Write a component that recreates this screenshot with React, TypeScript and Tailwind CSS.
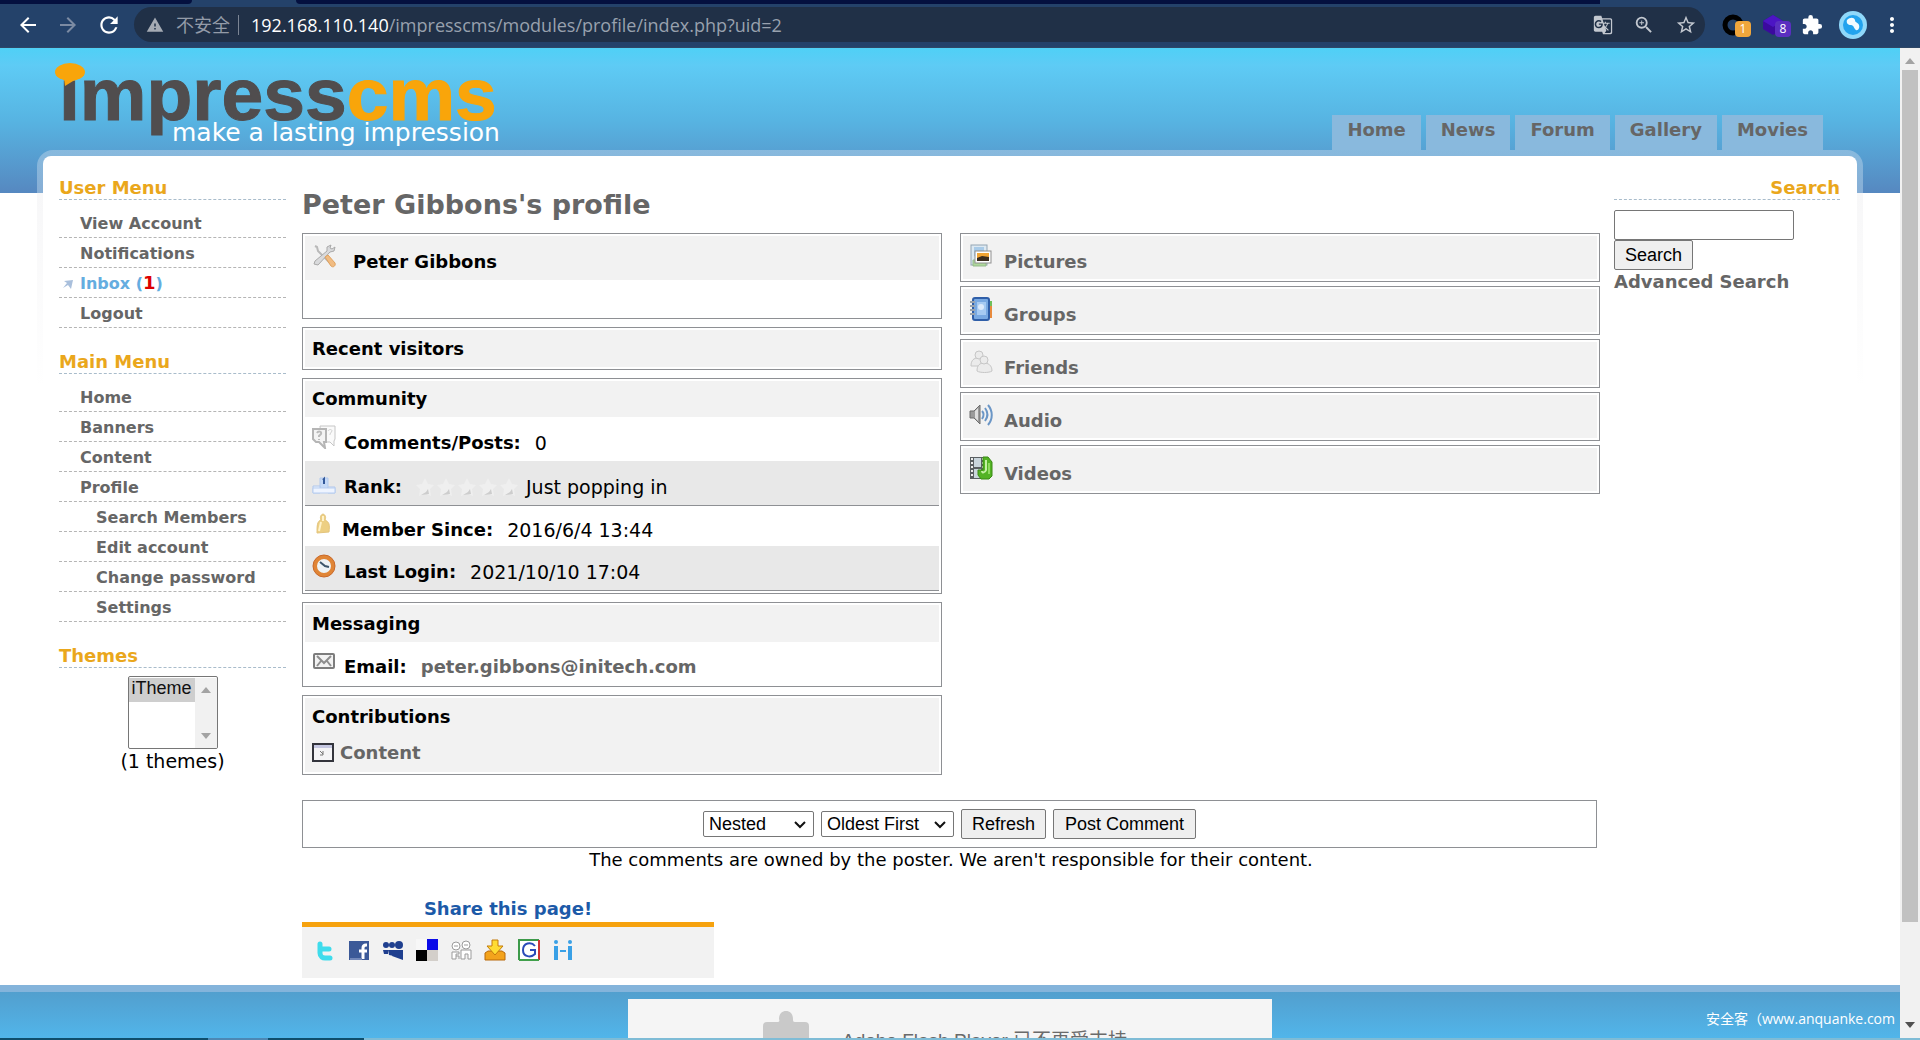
import type { ReactNode } from "react";
import {
  MdArrowBack,
  MdArrowForward,
  MdExtension,
  MdGTranslate,
  MdMoreVert,
  MdRefresh,
  MdStarBorder,
  MdWarning,
  MdZoomIn,
} from "react-icons/md";

function BrowserBar() {
  return (
    <header className="shrink-0 bg-[#24426a] font-['Open_Sans','Noto_Sans_CJK_SC',sans-serif]">
      <div className="flex h-1">
        <div className="w-48 rounded-br bg-[#04103f]" />
        <div className="w-26" />
        <div className="flex-1 rounded-bl bg-[#04103f]" />
        <div className="w-80" />
      </div>
      <div className="flex h-11 items-center border-b border-[#2f4766] pb-0.5 pl-4">
        <button aria-label="Back" className="text-white">
          <MdArrowBack size={24} />
        </button>
        <button aria-label="Forward" className="ml-4 text-[#7c8ba3]">
          <MdArrowForward size={24} />
        </button>
        <button aria-label="Reload" className="ml-4 text-white">
          <MdRefresh size={26} />
        </button>
        <div className="ml-3 flex h-[35px] min-w-0 flex-1 items-center rounded-full bg-[#203047] pr-2 pl-3 text-lg">
          <MdWarning size={18} className="shrink-0 text-[#a5abb4]" />
          <span className="ml-3 shrink-0 text-[#939ba8]">不安全</span>
          <span className="mx-2 h-5 w-px shrink-0 bg-[#7b8594]" />
          <input
            aria-label="Address"
            className="sr-only"
            defaultValue="192.168.110.140/impresscms/modules/profile/index.php?uid=2"
          />
          <span className="ml-1 flex-1 truncate text-[#98a1ae]">
            <span className="text-white">192.168.110.140</span>
            /impresscms/modules/profile/index.php?uid=2
          </span>
          <div className="flex items-center gap-5 text-[#c3c8d0]">
            <button aria-label="Translate">
              <MdGTranslate size={20} />
            </button>
            <button aria-label="Zoom">
              <MdZoomIn size={22} />
            </button>
            <button aria-label="Bookmark">
              <MdStarBorder size={22} />
            </button>
          </div>
        </div>
        <div className="flex items-center gap-4 pr-4 pl-4">
          <button aria-label="Extension, 1 item" className="relative">
            <svg width="24" height="24" viewBox="0 0 24 24">
              <circle cx="12" cy="12" r="8" fill="none" stroke="#000" strokeWidth="5" />
            </svg>
            <span className="absolute top-2 left-3.5 h-4 w-4 rounded-sm bg-[#f0a63c] text-center text-xs leading-4 text-white">
              1
            </span>
          </button>
          <button aria-label="Extension, 8 items" className="relative">
            <svg width="24" height="24" viewBox="0 0 24 24">
              <path d="M12 2l10 6v8l-10 6-10-6V8z" fill="#3b0a9e" />
              <path d="M12 2l10 6-10 6L2 8z" fill="#4c15c4" />
            </svg>
            <span className="absolute top-2 left-3.5 h-4 w-4 rounded-sm bg-[#5a2fc0] text-center text-xs leading-4 text-white">
              8
            </span>
          </button>
          <button aria-label="Extensions" className="text-white">
            <MdExtension size={22} />
          </button>
          <button aria-label="Profile">
            <svg width="28" height="28" viewBox="0 0 28 28">
              <circle cx="14" cy="14" r="14" fill="#8fd8fa" />
              <circle cx="14" cy="14" r="10" fill="#22a3ee" />
              <path d="M8 9c3-3 7-3 8 0 0 3 3 2 4 5s-1 6-3 5-2-5-5-5-5-2-4-5z" fill="#f2fbff" />
            </svg>
          </button>
          <button aria-label="Menu" className="-ml-[3px] text-white">
            <MdMoreVert size={24} />
          </button>
        </div>
      </div>
    </header>
  );
}

function Logo() {
  return (
    <svg width="460" height="90" viewBox="0 0 460 90" role="img" aria-label="impresscms make a lasting impression">
      <text
        x="4"
        y="60"
        fontSize="75"
        fontWeight="bold"
        fontFamily="'Liberation Sans',sans-serif"
        fill="#504d4e"
        stroke="#504d4e"
        strokeWidth="1"
      >
        ımpress
        <tspan fill="#f9a50a" stroke="#f9a50a">
          cms
        </tspan>
      </text>
      <ellipse cx="15" cy="12" rx="15" ry="9" fill="#f9a50a" />
      <path d="M9 18h14l-13 8z" fill="#f9a50a" />
      <text x="117" y="81" fontSize="25" fontFamily="'DejaVu Sans',sans-serif" fill="#fff">
        make a lasting impression
      </text>
    </svg>
  );
}

const tabs = ["Home", "News", "Forum", "Gallery", "Movies"];

function SiteHeader() {
  return (
    <div className="flex h-[102px] items-end justify-between pr-[77px] pl-[55px]">
      <a href="#home">
        <Logo />
      </a>
      <nav className="flex gap-[5px]">
        {tabs.map((t) => (
          <a
            key={t}
            href={`#${t}`}
            className="h-[35px] bg-[#89b9dd] px-[15px] pt-[3px] text-lg leading-6 font-bold text-[#666]"
          >
            {t}
          </a>
        ))}
      </nav>
    </div>
  );
}

function SideHeading({ children, right }: { children: ReactNode; right?: boolean }) {
  return (
    <h2
      className={`border-b border-dashed border-[#a9bccb] pt-0.5 text-lg leading-[22px] font-bold text-[#eaa71c] ${
        right ? "text-right" : ""
      }`}
    >
      {children}
    </h2>
  );
}

type Item = { label: string; sub?: boolean; unread?: number };

const userMenu: Item[] = [
  { label: "View Account" },
  { label: "Notifications" },
  { label: "Inbox", unread: 1 },
  { label: "Logout" },
];
const mainMenu: Item[] = [
  { label: "Home" },
  { label: "Banners" },
  { label: "Content" },
  { label: "Profile" },
  { label: "Search Members", sub: true },
  { label: "Edit account", sub: true },
  { label: "Change password", sub: true },
  { label: "Settings", sub: true },
];

function Menu({ title, items }: { title: string; items: Item[] }) {
  return (
    <section>
      <SideHeading>{title}</SideHeading>
      <ul className="mt-2">
        {items.map((it) => (
          <li
            key={it.label}
            className={`flex h-[30px] items-center border-b border-dashed border-[#b5b5b5] pt-0.5 text-base font-bold text-[#666] ${
              it.sub ? "pl-[37px]" : it.unread ? "pl-[3px]" : "pl-[21px]"
            }`}
          >
            {it.unread ? (
              <>
                <svg width="12" height="12" viewBox="0 0 12 12" className="mr-[6px]">
                  <path d="M2 3l9-1-2 9-3-4-5 3 4-5z" fill="#a9bfdc" />
                </svg>
                <a href="#inbox" className="text-[#64ade0]">
                  {it.label} (<span className="text-lg leading-6 text-[#dd0000]">{it.unread}</span>)
                </a>
              </>
            ) : (
              <a href={`#${it.label}`}>{it.label}</a>
            )}
          </li>
        ))}
      </ul>
    </section>
  );
}

function Themes() {
  return (
    <section>
      <SideHeading>Themes</SideHeading>
      <div className="mt-2 flex flex-col items-center">
        <div className="flex h-[73px] w-[90px] overflow-hidden rounded-xs border border-[#767676] bg-white pt-px">
          <select
            size={3}
            aria-label="Theme"
            defaultValue="iTheme"
            className="min-w-0 flex-1 appearance-none overflow-hidden font-['Liberation_Sans',sans-serif] text-lg leading-6"
          >
            <option value="iTheme" className="h-6 bg-[#cecece] px-[3px] py-0">
              iTheme
            </option>
          </select>
          <div className="flex w-[22px] flex-col items-center justify-between bg-[#f1f1f1] py-[9px]">
            <svg width="10" height="6" viewBox="0 0 10 6">
              <path d="M0 6l5-6 5 6z" fill="#a3a3a3" />
            </svg>
            <svg width="10" height="6" viewBox="0 0 10 6">
              <path d="M0 0l5 6 5-6z" fill="#a3a3a3" />
            </svg>
          </div>
        </div>
        <p className="text-[19px] leading-6">(1 themes)</p>
      </div>
    </section>
  );
}

function Icon({ children, w = 24, h = 24 }: { children: ReactNode; w?: number; h?: number }) {
  return (
    <svg width={w} height={h} viewBox={`0 0 ${w} ${h}`} className="shrink-0" aria-hidden="true">
      {children}
    </svg>
  );
}

function ToolsIcon() {
  return (
    <Icon>
      <path d="M3 2l2 1 1 4 13 13" fill="none" stroke="#b9b9b9" strokeWidth="2" />
      <path d="M2 20l4 1 12-13 4-1 1-4-3 2-2-1 1-3-4 2v4L3 17z" fill="#d9dadc" stroke="#a9a9a9" />
      <path d="M13 13l3-2 7 8c1 3-2 5-4 3z" fill="#f1bc82" stroke="#e0a25f" />
    </Icon>
  );
}

function CommentsIcon() {
  return (
    <Icon>
      <path d="M8 1h15v13l-1 2v5l-4-4H9z" fill="#fafafa" stroke="#c6c6c6" />
      <path d="M1 4h13v13h-2l1 6-6-6H4l-3-3z" fill="#f4f4f4" stroke="#b5b5b5" strokeWidth="2" />
      <path d="M5 8c1-2 5-2 4 1l-2 2v1m0 2v1" fill="none" stroke="#bbb" strokeWidth="2" />
      <path d="M16 6c1-2 4-2 4 0l-2 3v1" fill="none" stroke="#d2d2d2" />
    </Icon>
  );
}

function RankIcon() {
  return (
    <Icon h={26}>
      <g transform="translate(0 8)">
        <path d="M8 2h8v14H8z" fill="#c6daf7" stroke="#b3caee" />
        <path d="M1 10h7v7H1zM16 11h7v6h-7z" fill="#e7f0fd" stroke="#b0c7ec" />
        <path d="M1 12h22v5H1z" fill="#eef4ff" stroke="#b7cdf0" />
        <path d="M11 4l1-1v5" fill="none" stroke="#33589a" strokeWidth="2" />
      </g>
    </Icon>
  );
}

function MemberIcon() {
  return (
    <Icon w={22} h={22}>
      <path d="M11 1c3 1 3 4 2 6 4 2 5 4 4 12l-12 1c0-7 0-12 4-13-1-2-1-5 2-6z" fill="#edcf83" stroke="#e3c47c" />
      <path d="M9 9l-2 9M11 3v5" stroke="#fff3cb" strokeWidth="2" />
    </Icon>
  );
}

function ClockIcon() {
  return (
    <Icon>
      <circle cx="12" cy="12" r="9" fill="#eef3f5" stroke="#e08536" strokeWidth="4" />
      <circle cx="12" cy="12" r="11" fill="none" stroke="#c9692a" />
      <path d="M8 8l5 4 4 1" fill="none" stroke="#3d566b" strokeWidth="2" />
    </Icon>
  );
}

function MailIcon() {
  return (
    <Icon h={18}>
      <rect x="2" y="2" width="20" height="14" rx="1" fill="#f3f3f3" stroke="#7d7d7d" strokeWidth="2" />
      <path d="M5 4l7 7 7-7M5 14l4-5M19 14l-4-5" fill="none" stroke="#8e8e8e" strokeWidth="2" />
    </Icon>
  );
}

function WindowIcon() {
  return (
    <Icon w={22} h={19}>
      <rect x="1" y="1" width="20" height="17" fill="#f4f4f6" stroke="#33343c" strokeWidth="2" />
      <path d="M2 2h18v3H2z" fill="#c6c8e2" />
      <path d="M8 8l3 3M11 8v4H8" fill="none" stroke="#777" />
    </Icon>
  );
}

function PicturesIcon() {
  return (
    <Icon>
      <rect x="2" y="1" width="16" height="20" fill="#dde9f2" stroke="#94a5b3" />
      <rect x="5" y="3" width="10" height="9" fill="#a9cbe8" />
      <path d="M4 16h13v6H4z" fill="#aed89b" stroke="#95b98a" />
      <rect x="6" y="7" width="16" height="12" fill="#fff" stroke="#8f8f8f" />
      <rect x="8" y="9" width="12" height="8" fill="#f0a434" />
      <path d="M8 14l5-2 7 1v4H8z" fill="#3a2c1e" />
    </Icon>
  );
}

function GroupsIcon() {
  return (
    <Icon>
      <path d="M19 4h4v17h-4z" fill="#e88a3c" />
      <path d="M20 4h3v5h-3z" fill="#6fbf5a" />
      <rect x="4" y="1" width="16" height="22" rx="2" fill="#79a9e2" stroke="#2f5ea8" strokeWidth="2" />
      <rect x="8" y="5" width="9" height="13" fill="#a6caf2" />
      <circle cx="12" cy="10" r="3" fill="#dceafb" />
      <path d="M1 5h5M1 9h5M1 13h5M1 17h5" stroke="#9aa3ad" strokeWidth="2" />
    </Icon>
  );
}

function FriendsIcon() {
  return (
    <Icon>
      <g fill="#ebebeb" stroke="#c6c6c6">
        <path d="M2 16c0-6 3-8 7-8s7 2 7 8z" />
        <circle cx="10" cy="5" r="4" />
        <path d="M8 21c0-6 3-8 7-8s8 2 8 8c-3 2-12 2-15 0z" />
        <circle cx="15" cy="10" r="4" />
      </g>
    </Icon>
  );
}

function AudioIcon() {
  return (
    <Icon>
      <path d="M1 8h4l6-6v19l-6-6H1z" fill="#9b9b9b" stroke="#6d6d6d" />
      <path d="M6 8l3-3v13l-3-3z" fill="#dedede" />
      <path d="M13 8c2 2 2 5 0 8M16 5c3 4 3 9 0 13M19 2c5 6 5 14 0 20" fill="none" stroke="#6b96c6" strokeWidth="2" />
    </Icon>
  );
}

function VideosIcon() {
  return (
    <Icon>
      <rect x="1" y="1" width="15" height="22" fill="#5a5f62" />
      <path d="M5 2h7v9H5zM5 13h7v9H5z" fill="#c9d5dc" />
      <path d="M3 2v20M14 2v20" stroke="#eee" strokeWidth="2" strokeDasharray="2 2" />
      <path d="M14 1h5l4 5v14l-3 3h-8l-3-4v-5h5z" fill="#53b324" stroke="#3a8a14" />
      <path d="M17 4v10c-1 3-4 3-4 1" fill="none" stroke="#c4f0a4" strokeWidth="2" />
      <path d="M20 7v11" stroke="#8fdb5f" strokeWidth="2" />
    </Icon>
  );
}

function StarRow() {
  return (
    <svg width="102" height="20" viewBox="0 0 102 20" role="img" aria-label="0 of 5 stars">
      {[0, 21, 42, 63, 84].map((x) => (
        <g key={x} transform={`translate(${x} 0)`}>
          <path d="M9 1l3 6 6 1-4 4 1 7-6-3-6 3 1-7-4-4 6-1z" fill="#efefef" />
          <path d="M5 18l5-3 2-3 1 5z" fill="#cdcdcd" />
        </g>
      ))}
    </svg>
  );
}

function Box({ children }: { children: ReactNode }) {
  return <section className="border border-[#8e9094] bg-white p-[2px]">{children}</section>;
}

function BoxTitle({ children, className = "h-9" }: { children: ReactNode; className?: string }) {
  return (
    <h2 className={`flex items-center bg-[#f2f2f2] px-[7px] text-lg font-bold text-black ${className}`}>{children}</h2>
  );
}

function Row({
  icon,
  label,
  children,
  shaded,
  className = "h-11",
}: {
  icon: ReactNode;
  label: string;
  children: ReactNode;
  shaded?: boolean;
  className?: string;
}) {
  return (
    <div
      className={`flex items-center px-[7px] text-lg ${className} ${
        shaded ? "border-b border-[#8e9094] bg-[#e8e8e8]" : ""
      }`}
    >
      <span className="mb-1">{icon}</span>
      <span className="mt-2 ml-2 font-bold">{label}</span>
      <span className="mt-2 ml-[14px] flex items-center gap-2 text-[19px] leading-6">{children}</span>
    </div>
  );
}

const albums = [
  { label: "Pictures", icon: <PicturesIcon /> },
  { label: "Groups", icon: <GroupsIcon /> },
  { label: "Friends", icon: <FriendsIcon /> },
  { label: "Audio", icon: <AudioIcon /> },
  { label: "Videos", icon: <VideosIcon /> },
];

const control = "rounded-xs border border-[#767676] font-['Liberation_Sans',sans-serif] text-lg text-black";

function Dropdown({ label, value, className }: { label: string; value: string; className: string }) {
  return (
    <span className="relative flex">
      <select
        aria-label={label}
        defaultValue={value}
        className={`h-[26px] appearance-none bg-white pl-[5px] leading-6 ${control} ${className}`}
      >
        <option>{value}</option>
      </select>
      <svg width="12" height="8" viewBox="0 0 12 8" className="pointer-events-none absolute top-[10px] right-2">
        <path d="M1 1l5 5 5-5" fill="none" stroke="#111" strokeWidth="2" />
      </svg>
    </span>
  );
}

const shares: { label: string; icon: ReactNode }[] = [
  {
    label: "Twitter",
    icon: (
      <path
        d="M6 5v9c0 4 3 5 5 5h5M6 10h9"
        fill="none"
        stroke="#3fdcec"
        strokeWidth="5"
        strokeLinecap="round"
        strokeLinejoin="round"
      />
    ),
  },
  {
    label: "Facebook",
    icon: (
      <>
        <rect x="1" y="2" width="20" height="19" fill="#3b5998" />
        <path d="M19 6h-1c-2 0-3 1-3 3v11M11 12h8" fill="none" stroke="#fff" strokeWidth="3" />
        <path d="M2 20h12" stroke="#7288ba" strokeWidth="2" />
      </>
    ),
  },
  {
    label: "MySpace",
    icon: (
      <g fill="#1f3f8f">
        <circle cx="4" cy="6" r="3" />
        <circle cx="10" cy="6" r="3" />
        <circle cx="17" cy="6" r="4" />
        <path d="M1 11h5v4H2zM6 11h6v6l-5-1zM11 11h10v10l-11-4z" />
      </g>
    ),
  },
  {
    label: "Delicious",
    icon: (
      <>
        <rect x="0" y="0" width="22" height="22" fill="#f7f7f7" />
        <rect x="11" y="0" width="11" height="11" fill="#0b0be8" />
        <rect x="0" y="11" width="11" height="11" fill="#000" />
        <rect x="11" y="11" width="11" height="11" fill="#d3cfca" />
      </>
    ),
  },
  {
    label: "Digg",
    icon: (
      <g fill="#fff" stroke="#9b9b9b">
        <circle cx="6" cy="7" r="4" />
        <circle cx="16" cy="6" r="4" />
        <path d="M2 13h7v2H6v5H2zM11 11h10v9h-3v-5h-3v5h-4z" />
        <path d="M4 7h4M14 6h4M6 17h3v3" fill="none" />
      </g>
    ),
  },
  {
    label: "Save",
    icon: (
      <>
        <path d="M1 14l3-2h14l3 2v7H1z" fill="#f3a31c" stroke="#b8690a" />
        <path d="M8 1h6v6h5l-8 9-8-9h5z" fill="#ffdc32" stroke="#c47a0b" />
      </>
    ),
  },
  {
    label: "Google",
    icon: (
      <>
        <path d="M1 21V1h20" fill="none" stroke="#3d9a4a" strokeWidth="2" />
        <path d="M21 1v20" stroke="#cc3434" strokeWidth="2" />
        <path d="M1 21h20" stroke="#41a04c" strokeWidth="2" />
        <rect x="2" y="2" width="18" height="18" fill="#fff" />
        <path d="M17 7c-4-5-12-3-12 4s8 8 12 4v-4h-5" fill="none" stroke="#2b4bb8" strokeWidth="2" />
      </>
    ),
  },
  {
    label: "Hi5",
    icon: (
      <g fill="#39a0e6">
        <circle cx="4" cy="3" r="2" />
        <circle cx="18" cy="3" r="2" />
        <path d="M2 7h4v14H2zM16 7h4v14h-4zM8 11h6v2H8z" />
      </g>
    ),
  },
];

function Share() {
  return (
    <section className="mt-[23px] w-[412px]">
      <h2 className="border-b-5 border-[#f6a20e] pt-0.5 pb-px text-center text-lg leading-6 font-bold text-[#1c5aa8]">
        Share this page!
      </h2>
      <div className="flex h-[51px] items-start gap-3 bg-[#f2f2f2] px-3 pt-3">
        {shares.map((s) => (
          <a key={s.label} href={`#${s.label}`} aria-label={s.label}>
            <Icon w={22} h={22}>
              {s.icon}
            </Icon>
          </a>
        ))}
      </div>
    </section>
  );
}

function Profile() {
  return (
    <main className="min-w-0 flex-1 pt-3">
      <h1 className="text-[27px] leading-9 font-bold text-[#666]">Peter Gibbons's profile</h1>
      <div className="mt-[10px] grid grid-cols-2 items-start gap-[18px]">
        <div className="flex flex-col gap-2">
          <Box>
            <BoxTitle className="h-11">
              <span className="mb-1">
                <ToolsIcon />
              </span>
              <span className="mt-2 ml-[17px]">Peter Gibbons</span>
            </BoxTitle>
            <div className="h-9" />
          </Box>
          <Box>
            <BoxTitle className="h-[37px]">Recent visitors</BoxTitle>
          </Box>
          <Box>
            <BoxTitle>Community</BoxTitle>
            <Row icon={<CommentsIcon />} label="Comments/Posts:">
              0
            </Row>
            <Row icon={<RankIcon />} label="Rank:" shaded className="h-[45px]">
              <StarRow />
              Just popping in
            </Row>
            <Row icon={<MemberIcon />} label="Member Since:" className="h-10">
              2016/6/4 13:44
            </Row>
            <Row icon={<ClockIcon />} label="Last Login:" shaded className="h-[45px]">
              2021/10/10 17:04
            </Row>
          </Box>
          <Box>
            <BoxTitle className="h-[37px]">Messaging</BoxTitle>
            <Row icon={<MailIcon />} label="Email:" className="h-[42px]">
              <a href="#mail" className="text-lg leading-6 font-bold text-[#666]">
                peter.gibbons@initech.com
              </a>
            </Row>
          </Box>
          <Box>
            <BoxTitle className="h-[37px]">Contributions</BoxTitle>
            <div className="flex h-[37px] items-center gap-[6px] bg-[#f2f2f2] px-[7px] pb-0.5 text-lg font-bold text-[#666]">
              <WindowIcon />
              <a href="#content">Content</a>
            </div>
          </Box>
        </div>
        <div className="flex flex-col gap-1">
          {albums.map((a) => (
            <Box key={a.label}>
              <a
                href={`#${a.label}`}
                className="flex h-[43px] items-center gap-[11px] bg-[#f2f2f2] px-[6px] text-lg font-bold text-[#666]"
              >
                <span className="mb-1">{a.icon}</span>
                <span className="mt-2">{a.label}</span>
              </a>
            </Box>
          ))}
        </div>
      </div>
      <form className="mt-[25px] mr-[3px] flex h-12 items-center justify-center gap-[7px] border border-[#8e9094]">
        <Dropdown label="View mode" value="Nested" className="w-[111px]" />
        <Dropdown label="Sort order" value="Oldest First" className="w-[133px]" />
        <button type="button" className={`h-[30px] bg-[#efefef] px-[10px] ${control}`}>
          Refresh
        </button>
        <button type="button" className={`h-[30px] bg-[#efefef] px-[11px] ${control}`}>
          Post Comment
        </button>
      </form>
      <p className="text-center text-lg leading-6">
        The comments are owned by the poster. We aren't responsible for their content.
      </p>
      <Share />
    </main>
  );
}

function SearchPanel() {
  return (
    <aside className="w-[226px] shrink-0">
      <SideHeading right>Search</SideHeading>
      <form className="mt-[10px] flex flex-col items-start">
        <input type="text" aria-label="Search terms" className={`h-[30px] w-[180px] bg-white px-1 ${control}`} />
        <button type="button" className={`h-[30px] bg-[#efefef] px-[10px] ${control}`}>
          Search
        </button>
      </form>
      <a href="#advanced" className="text-lg leading-6 font-bold text-[#666]">
        Advanced Search
      </a>
    </aside>
  );
}

function Footer() {
  return (
    <footer className="relative flex flex-1 justify-center overflow-hidden border-t-[7px] border-[#84b4db] bg-linear-to-b from-[#529fce] to-[#51b5ea]">
      <div className="mt-[7px] flex h-24 w-[644px] bg-[#f5f5f5] pl-[135px]">
        <svg width="46" height="50" viewBox="0 0 46 50" className="mt-3 shrink-0">
          <path
            d="M4 11h10c2 0 3-1 2-3 0-5 3-8 7-8s7 3 7 8c0 2 0 3 2 3h10q4 0 4 4v35H0V15q0-4 4-4z"
            fill="#c9c9c9"
          />
        </svg>
        <p className="mt-[30px] ml-[33px] font-['Liberation_Sans','Noto_Sans_CJK_SC',sans-serif] text-[19px] leading-6 text-[#6a6a6a]">
          Adobe Flash Player 已不再受支持
        </p>
      </div>
      <p className="absolute top-[15px] right-[5px] font-['Open_Sans','Noto_Sans_CJK_SC',sans-serif] text-sm leading-6 text-white">
        安全客（www.anquanke.com
      </p>
    </footer>
  );
}

function Scrollbar() {
  return (
    <div className="flex w-5 shrink-0 flex-col items-center bg-[#f1f1f1] pt-2" aria-hidden="true">
      <svg width="10" height="6" viewBox="0 0 10 6" className="mt-[2px]">
        <path d="M0 6l5-6 5 6z" fill="#a3a3a3" />
      </svg>
      <div className="mt-[6px] w-4 grow-[855] bg-[#c1c1c1]" />
      <div className="grow-[100]" />
      <svg width="10" height="6" viewBox="0 0 10 6" className="mb-[10px]">
        <path d="M0 0l5 6 5-6z" fill="#505050" />
      </svg>
    </div>
  );
}

export default function App() {
  return (
    <div className="flex h-screen flex-col overflow-hidden bg-white font-['DejaVu_Sans',sans-serif] text-black">
      <BrowserBar />
      <div className="flex min-h-0 flex-1">
        <div className="flex min-w-0 flex-1 flex-col overflow-hidden bg-[linear-gradient(to_bottom,#4fd0f6,#5ecbf5_12%,#57b4e2_50%,#5688c0)] bg-[length:100%_145px] bg-no-repeat">
          <SiteHeader />
          <div className="mx-[37px] rounded-t-2xl bg-[linear-gradient(to_bottom,rgba(175,205,230,0.55)_0,rgba(175,205,230,0.55)_43px,rgba(120,120,140,0.06)_43px,rgba(255,255,255,0)_240px)] px-[6px] pt-[6px]">
            <div className="flex rounded-t-lg bg-white pt-[19px] pr-[17px] pb-[7px] pl-4">
              <div className="flex w-[227px] shrink-0 flex-col gap-[21px]">
                <Menu title="User Menu" items={userMenu} />
                <Menu title="Main Menu" items={mainMenu} />
                <Themes />
              </div>
              <div className="ml-4 flex min-w-0 flex-1 gap-[14px]">
                <Profile />
                <SearchPanel />
              </div>
            </div>
          </div>
          <Footer />
        </div>
        <Scrollbar />
      </div>
      <div className="flex h-0.5 shrink-0 bg-[#7fbcd6]">
        <div className="w-52 bg-[#0f4e6c]" />
        <div className="w-15 bg-[#4c88b4]" />
        <div className="w-24 bg-[#0f4e6c]" />
      </div>
    </div>
  );
}
